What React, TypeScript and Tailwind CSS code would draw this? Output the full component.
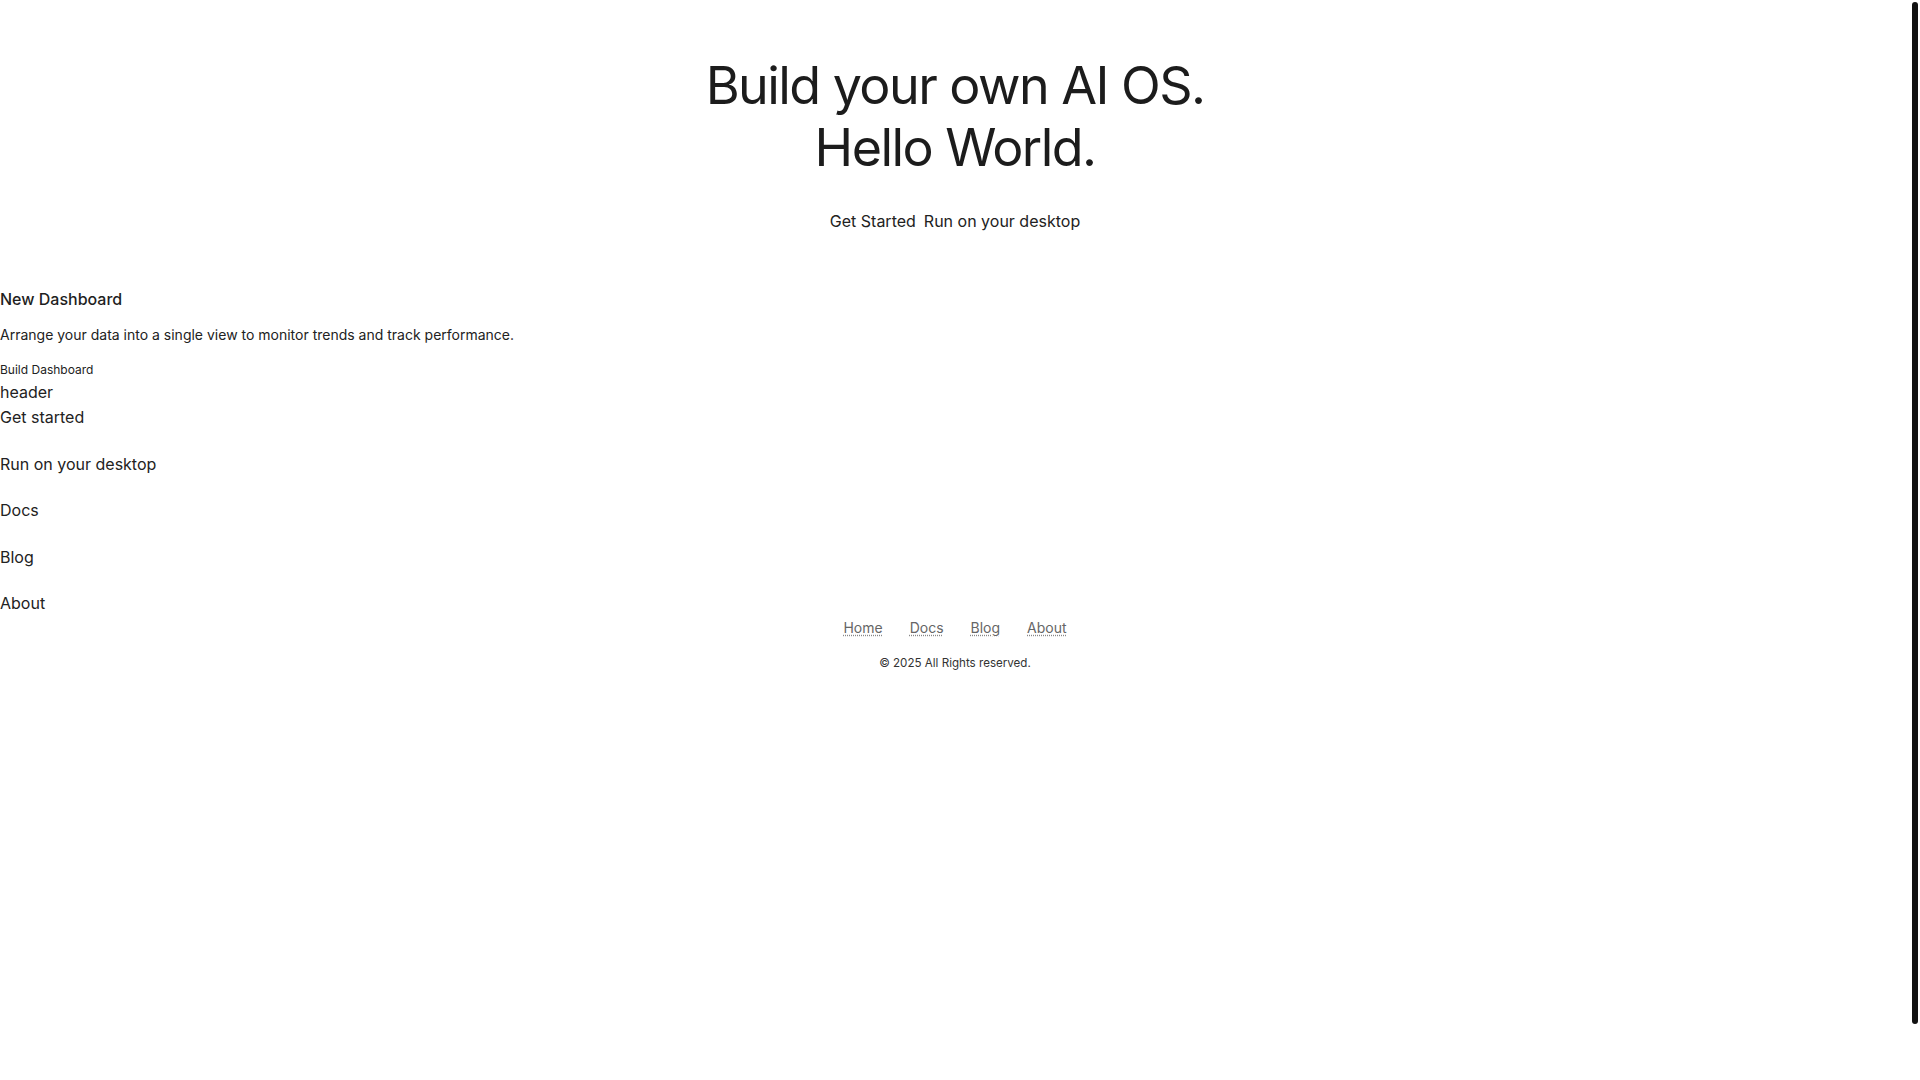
export default function App() {
  const nav = ["Run on your desktop", "Docs", "Blog", "About"];
  const footer = ["Home", "Docs", "Blog", "About"];

  return (
    <div className="flex h-screen overflow-hidden bg-white text-[#1f1f1f] [font-family:Inter,'Noto_Sans',sans-serif]">
      <div className="min-w-0 flex-1">
        {/* Hero */}
        <section className="flex flex-col items-center pt-[55px]">
          <h1 className="text-center text-[52px] leading-[62px] font-normal tracking-[-0.03em] text-[#1c1c1c]">
            Build your own AI OS.
            <br />
            Hello World.
          </h1>
          <div className="mt-[30px] flex items-center gap-2 text-base leading-6 text-[#222]">
            <a href="#">Get Started</a>
            <a href="#">Run on your desktop</a>
          </div>
        </section>

        {/* Dashboard card */}
        <section className="mt-[54px] flex flex-col items-start">
          <h2 className="text-base leading-6 font-medium text-[#1f1f1f]">New Dashboard</h2>
          <p className="mt-[14px] text-sm leading-5 text-[#222]">
            Arrange your data into a single view to monitor trends and track performance.
          </p>
          <button className="mt-[17px] text-xs leading-4 text-[#222]">Build Dashboard</button>
        </section>

        {/* Nav */}
        <header className="mt-[2px] text-base leading-6 text-[#222]">
          <div>header</div>
          <a href="#" className="mt-px block">
            Get started
          </a>
          <nav className="mt-[22.5px] flex flex-col gap-[22.5px]">
            {nav.map((item) => (
              <a key={item} href="#" className="block">
                {item}
              </a>
            ))}
          </nav>
        </header>

        {/* Footer */}
        <footer className="mt-[3px] flex flex-col items-center">
          <div className="flex items-center gap-[27px] text-sm leading-5 text-[#666]">
            {footer.map((item) => (
              <a
                key={item}
                href="#"
                className="underline decoration-dotted decoration-[#888] underline-offset-2"
              >
                {item}
              </a>
            ))}
          </div>
          <p className="mt-[17px] text-[11.6px] leading-4 text-[#333]">© 2025 All Rights reserved.</p>
        </footer>
      </div>

      {/* Scrollbar rail */}
      <aside className="w-[10px] shrink-0 px-[2px] pt-[2px]">
        <div className="h-[1022px] rounded-full bg-[#111]" />
      </aside>
    </div>
  );
}
